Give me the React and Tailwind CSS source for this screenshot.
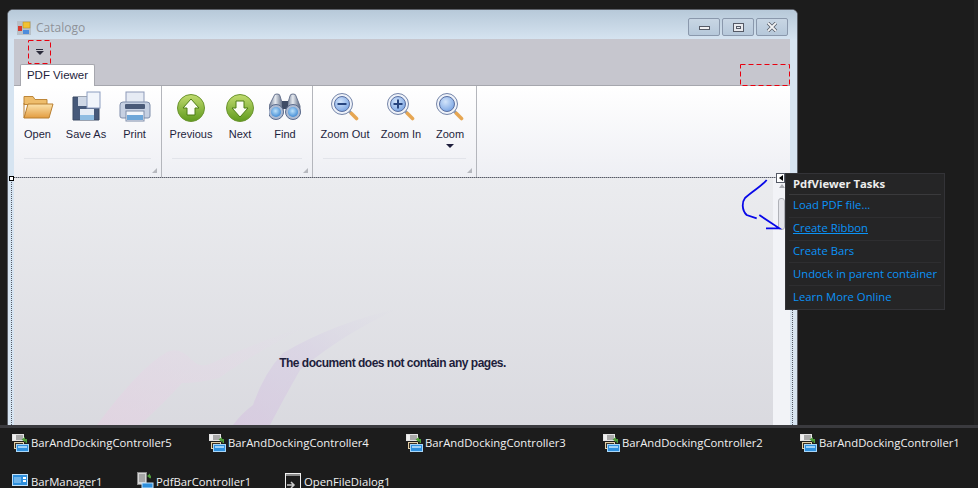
import React from 'react';

const FolderIcon = () => (
  <svg width="32" height="32" viewBox="0 0 32 32">
    <defs>
      <linearGradient id="fold" x1="0" y1="0" x2="0" y2="1">
        <stop offset="0" stopColor="#fde8b4" />
        <stop offset="1" stopColor="#e39c40" />
      </linearGradient>
    </defs>
    <path d="M2 5.500h9l2 3h12v5H2z" fill="#eebd6c" stroke="#bd8638" />
    <path d="M2 27V12M2 27l4-14h25l-4 14z" fill="url(#fold)" stroke="#b97f30" />
  </svg>
);

const SaveIcon = () => (
  <svg width="32" height="32" viewBox="0 0 32 32">
    <path d="M3 6h26v23H3z" fill="#46597a" stroke="#3a4a64" />
    <rect x="10" y="18" width="14" height="11" fill="#e6edf6" />
    <rect x="10" y="24" width="14" height="5" fill="#8fbde2" />
    <rect x="8" y="6" width="9" height="9" fill="#cfd8e6" />
    <rect x="17" y="1" width="13" height="16" fill="#f1f5fb" stroke="#8c9dc0" />
  </svg>
);

const PrintIcon = () => (
  <svg width="32" height="32" viewBox="0 0 32 32">
    <rect x="7" y="1" width="18" height="13" fill="#e6ebf4" stroke="#8d9ab8" />
    <path d="M1 14q0-3 3-3h24q3 0 3 3v11q0 2-2 2H3q-2 0-2-2z" fill="#c6d0e2" stroke="#7f8daa" />
    <rect x="6" y="13" width="20" height="5" rx="1" fill="#4a5a78" />
    <rect x="7" y="20" width="18" height="10" fill="#f3f6fb" stroke="#7f8daa" />
    <rect x="8" y="24" width="16" height="5" fill="#6ea6d8" />
  </svg>
);

const ArrowIcon = ({ up, id }) => (
  <svg width="30" height="30" viewBox="0 0 30 30" className="mt-[2px]">
    <defs>
      <linearGradient id={id} x1="0" y1="0" x2="0" y2="1">
        <stop offset="0" stopColor="#c2dc70" />
        <stop offset="1" stopColor="#5f9a1c" />
      </linearGradient>
    </defs>
    <circle cx="15" cy="15" r="13.500" fill={`url(#${id})`} stroke="#6b9430" />
    <path
      d={up ? 'M15 6l8 9h-4v7h-8v-7H7z' : 'M15 24l8-9h-4V8h-8v7H7z'}
      fill="#fbfdf5"
      stroke="#4d7d14"
    />
  </svg>
);

const BinocularsIcon = () => (
  <svg width="32" height="32" viewBox="0 0 32 32">
    <defs>
      <linearGradient id="barrel" x1="0" y1="0" x2="1" y2="0">
        <stop offset="0" stopColor="#6b7890" />
        <stop offset="0.45" stopColor="#e6eaf0" />
        <stop offset="1" stopColor="#56637c" />
      </linearGradient>
      <radialGradient id="lens" cx="0.45" cy="0.4" r="0.7">
        <stop offset="0" stopColor="#bfe2fa" />
        <stop offset="1" stopColor="#2f7fd0" />
      </radialGradient>
    </defs>
    <path d="M5 5q0-2 3-2t3 2l3 10v8H0V15z" fill="url(#barrel)" stroke="#6a7690" />
    <path d="M21 5q0-2 3-2t3 2l4 10v8H18V15z" fill="url(#barrel)" stroke="#6a7690" />
    <rect x="13" y="10" width="6" height="8" fill="#3f4c66" />
    <circle cx="7" cy="21" r="7.500" fill="#aebbd2" stroke="#5b6b8c" />
    <circle cx="24" cy="21" r="7.500" fill="#aebbd2" stroke="#5b6b8c" />
    <circle cx="7" cy="21" r="5" fill="url(#lens)" />
    <circle cx="24" cy="21" r="5" fill="url(#lens)" />
  </svg>
);

const MagnifierIcon = ({ kind, id }) => (
  <svg width="28" height="28" viewBox="0 0 28 28" className="mt-[2px]">
    <defs>
      <radialGradient id={id} cx="0.4" cy="0.35" r="0.8">
        <stop offset="0" stopColor="#d3e4fa" />
        <stop offset="1" stopColor="#6c9be0" />
      </radialGradient>
    </defs>
    <path d="M17 17l3 3" stroke="#8d97ab" strokeWidth="3" />
    <path d="M20.500 20.500l5 5" stroke="#e6a652" strokeWidth="3.600" strokeLinecap="round" />
    <circle cx="11" cy="11" r="10.500" fill="#eef2f9" stroke="#7484a8" />
    <circle cx="11" cy="11" r="7.500" fill={`url(#${id})`} stroke="#5a6fa0" />
    {kind !== 'zoom' && <rect x="6.500" y="10" width="9" height="2" fill="#27457f" />}
    {kind === 'in' && <rect x="10" y="6.500" width="2" height="9" fill="#27457f" />}
  </svg>
);

const RibbonButton = ({ label, width, icon, dropdown }) => (
  <div className="flex flex-col items-center" style={{ width }}>
    <div className="h-[36px] pt-[5px] flex items-start justify-center">{icon}</div>
    <span className="mt-[4px] text-[11px] leading-[16px] whitespace-nowrap text-[#1e1e3c] font-['Liberation_Sans',sans-serif]">{label}</span>
    {dropdown && <span className="mt-[2px] w-0 h-0 border-x-[4px] border-x-transparent border-t-[4px] border-t-[#1e1e3c]" />}
  </div>
);

const RibbonGroup = ({ width, children }) => (
  <div className="relative h-full border-r border-[#b4b6bc] px-[4px] shrink-0" style={{ width }}>
    <div className="flex">{children}</div>
    <div className="absolute left-[10px] right-[10px] top-[72px] h-px bg-[#e2e4ea]" />
    <div className="absolute right-[4px] bottom-[4px] w-0 h-0 border-l-[5px] border-l-transparent border-b-[5px] border-b-[#b6b8be]" />
  </div>
);

const DashedBox = ({ width, height, className }) => (
  <svg width={width} height={height} className={className}>
    <rect x="0.5" y="0.5" width={width - 1} height={height - 1} fill="none" stroke="#e8000f" strokeDasharray="5 3" />
  </svg>
);

const TrayIcon = () => (
  <svg width="17" height="18" viewBox="0 0 17 18" className="shrink-0">
    <rect x="0.500" y="0.500" width="11" height="6" fill="#a9a9a9" stroke="#e4e4e4" />
    <rect x="1" y="1" width="3" height="5" fill="#f0f0f0" />
    <path d="M15 9V5H13V3L9.500 5.500 13 8V7h.5v2z" fill="#4f9d3a" />
    <rect x="2.500" y="8.500" width="9" height="6" fill="#3a3024" stroke="#e2cfa6" />
    <rect x="4.500" y="10.500" width="12" height="7" fill="#2e8fdc" stroke="#a9d6f8" />
    <rect x="6" y="12" width="9" height="2" fill="#9fd2f8" />
  </svg>
);

const trayTop = ['BarAndDockingController5', 'BarAndDockingController4', 'BarAndDockingController3', 'BarAndDockingController2', 'BarAndDockingController1'];

const TaskLink = ({ children, underline }) => (
  <div className={`h-[22.75px] mx-[3px] px-[4px] flex items-center whitespace-nowrap border-b border-[#2e2e30] last:border-b-0 text-[11.3px] text-[#0b93f6] ${underline ? 'underline' : ''}`}>
    {children}
  </div>
);

export default function App() {
  return (
    <div className="relative w-[978px] h-[488px] bg-[#1c1c1c] overflow-hidden flex flex-col font-['Open_Sans',sans-serif]">
      {/* designer surface */}
      <div className="h-[425px] shrink-0 pt-[9px] pl-[7px] overflow-hidden">
        <div className="w-[791px] h-[440px] border border-[#5c6068] rounded-t-[6px] bg-[#d6e4f1] flex flex-col overflow-hidden">
          {/* title bar */}
          <div className="h-[29px] shrink-0 flex items-start pt-[11px] pl-[9px] pr-[9px] bg-gradient-to-b from-[#b7c9d9] to-[#d5e3f0]">
            <svg width="14" height="14" viewBox="0 0 14 14" className="shrink-0">
              <rect x="0" y="0" width="14" height="14" fill="#b8c0c8" />
              <rect x="6" y="1" width="7" height="6" fill="#f2c230" stroke="#b08a20" strokeWidth="0.5" />
              <rect x="1" y="5" width="4" height="5" fill="#d8382c" />
              <rect x="6" y="9" width="6" height="4" fill="#4d8cdc" />
            </svg>
            <span className="ml-[5px] text-[12px] leading-[14px] text-[#8f9298]">Catalogo</span>
            <div className="ml-auto flex gap-[2px] mt-[-3px]">
              <div className="w-[32px] h-[18px] border border-[#8a98ac] rounded-[2px] bg-gradient-to-b from-[#c8d6e4] to-[#b6c8da] flex items-center justify-center">
                <span className="w-[11px] h-[4px] mt-[2px] bg-[#f0f0f2] border border-[#555a66]" />
              </div>
              <div className="w-[32px] h-[18px] border border-[#8a98ac] rounded-[2px] bg-gradient-to-b from-[#c8d6e4] to-[#b6c8da] flex items-center justify-center">
                <span className="w-[11px] h-[9px] bg-[#e8eaee] border border-[#555a66] flex items-center justify-center">
                  <span className="w-[5px] h-[3px] border border-[#555a66]" />
                </span>
              </div>
              <div className="w-[32px] h-[18px] border border-[#8a98ac] rounded-[2px] bg-gradient-to-b from-[#c8d6e4] to-[#b6c8da] flex items-center justify-center">
                <svg width="12" height="10" viewBox="0 0 12 10">
                  <path d="M2 1l8 8M10 1L2 9" stroke="#555a66" strokeWidth="3.400" fill="none" />
                  <path d="M2 1l8 8M10 1L2 9" stroke="#f2f3f5" strokeWidth="1.800" fill="none" />
                </svg>
              </div>
            </div>
          </div>

          {/* client area */}
          <div className="flex-1 ml-[6px] mr-[7px] flex flex-col min-h-0">
            <div className="relative h-[47px] shrink-0 bg-[#c6c6ce] border-b border-[#a6a7ae]">
              <div className="absolute left-[14px] top-[1px] w-[23px] h-[24px] flex flex-col items-center justify-center gap-[1px]">
                <DashedBox width={23} height={24} className="absolute left-0 top-0" />
                <span className="w-[7px] h-px bg-[#2a2a3a]" />
                <span className="w-0 h-0 border-x-[4px] border-x-transparent border-t-[4px] border-t-[#2a2a3a]" />
              </div>
              <DashedBox width={50} height={22} className="absolute right-0 top-[25px]" />
              <div className="absolute left-[6px] bottom-[-1px] w-[75px] h-[22px] bg-white border border-b-0 border-[#a6a7ae] rounded-t-[2px] flex items-center justify-center text-[11.5px] text-[#1e1e3c] font-['Liberation_Sans',sans-serif]">
                PDF Viewer
              </div>
            </div>

            {/* ribbon */}
            <div className="h-[92px] shrink-0 flex bg-gradient-to-b from-white to-[#eeeff4] border-b border-[#a8a9b0]">
              <RibbonGroup width={148}>
                <RibbonButton label="Open" width={39} icon={<FolderIcon />} />
                <RibbonButton label="Save As" width={58} icon={<SaveIcon />} />
                <RibbonButton label="Print" width={39} icon={<PrintIcon />} />
              </RibbonGroup>
              <RibbonGroup width={151}>
                <RibbonButton label="Previous" width={50} icon={<ArrowIcon up id="upG" />} />
                <RibbonButton label="Next" width={48} icon={<ArrowIcon id="downG" />} />
                <RibbonButton label="Find" width={42} icon={<BinocularsIcon />} />
              </RibbonGroup>
              <RibbonGroup width={164}>
                <RibbonButton label="Zoom Out" width={56} icon={<MagnifierIcon kind="out" id="zOut" />} />
                <RibbonButton label="Zoom In" width={56} icon={<MagnifierIcon kind="in" id="zIn" />} />
                <RibbonButton label="Zoom" width={42} dropdown icon={<MagnifierIcon kind="zoom" id="zZoom" />} />
              </RibbonGroup>
            </div>

            {/* viewer */}
            <div className="relative flex-1 flex min-h-0 bg-gradient-to-b from-[#ebecef] to-[#d8d8de]">
              <div className="relative flex-1 h-[247px] overflow-hidden flex items-center justify-center">
                <svg width="759" height="247" viewBox="0 0 759 247" className="absolute left-0 top-0">
                  <defs>
                    <linearGradient id="wavePink" x1="0" y1="1" x2="1" y2="0">
                      <stop offset="0" stopColor="#e6cfe2" stopOpacity="0.55" />
                      <stop offset="0.7" stopColor="#e6d8e8" stopOpacity="0.3" />
                      <stop offset="1" stopColor="#e0dcea" stopOpacity="0" />
                    </linearGradient>
                    <linearGradient id="wavePurple" x1="0" y1="1" x2="1" y2="0">
                      <stop offset="0" stopColor="#d6c2e0" stopOpacity="0.6" />
                      <stop offset="0.55" stopColor="#d4c8e4" stopOpacity="0.4" />
                      <stop offset="1" stopColor="#d8d4e8" stopOpacity="0" />
                    </linearGradient>
                  </defs>
                  <path d="M83 247Q125 190 153 174Q165 168 178 182Q185 190 196 186Q240 165 300 145Q240 175 205 200Q185 205 168 205Q150 225 126 247Z" fill="url(#wavePink)" />
                  <path d="M239 227Q250 195 269 175Q320 145 386 130Q330 155 286 192Q270 220 256 247H219Q228 235 239 227Z" fill="url(#wavePurple)" />
                </svg>
                <span className="relative top-[61px] left-[-1px] font-['Liberation_Sans',sans-serif] text-[12px] font-bold tracking-[-0.5px] text-[#1e1e3c]">
                  The document does not contain any pages.
                </span>
              </div>
              {/* scrollbar */}
              <div className="w-[17px] h-full shrink-0 bg-[#f2f3f7] flex flex-col items-center pt-[6px]">
                <span className="w-0 h-0 border-x-[3px] border-x-transparent border-b-[4px] border-b-[#a9abb1]" />
                <span className="mt-[10px] w-[7px] h-[32px] rounded-[3px] border border-[#b0b2b8] bg-[#e4e5ea]" />
              </div>
            </div>
          </div>
        </div>
      </div>

      {/* tray */}
      <div className="h-[3px] shrink-0 bg-[#3a3a3e]" />
      <div className="flex-1 pl-[12px] bg-[#1c1c1c] text-[11.3px] text-[#f1f1f1]">
        <div className="grid grid-cols-[197px_197px_197px_197px_197px] pt-[5px]">
          {trayTop.map((name) => (
            <div key={name} className="flex items-center gap-[2px] h-[20px]">
              <TrayIcon />
              <span className="whitespace-nowrap">{name}</span>
            </div>
          ))}
        </div>
        <div className="flex mt-[19px] h-[20px]">
          <div className="w-[125px] flex items-center gap-[3px]">
            <svg width="16" height="14" viewBox="0 0 16 14" className="shrink-0 mt-[-3px]">
              <rect x="0.500" y="0.500" width="15" height="11" fill="#2e8fdc" stroke="#bfe0fa" />
              <rect x="2" y="3" width="7" height="6" fill="#6fb5ec" />
              <rect x="11" y="3" width="3" height="2" fill="#fff" />
              <rect x="11" y="6" width="3" height="2" fill="#fff" />
            </svg>
            <span className="whitespace-nowrap">BarManager1</span>
          </div>
          <div className="w-[148px] flex items-center gap-[2px]">
            <svg width="17" height="17" viewBox="0 0 17 17" className="shrink-0 mt-[-4px]">
              <rect x="0.500" y="0.500" width="9" height="12" fill="#d6d6d6" stroke="#8a8a8a" />
              <path d="M2 3h6M2 5h6M2 7h6M2 9h6" stroke="#777" />
              <path d="M14 6V3.500H13V1.500L10 4 13 6.500z" fill="#4f9d3a" />
              <rect x="5" y="11" width="11" height="5" fill="#2e8fdc" stroke="#bfe0fa" />
            </svg>
            <span className="whitespace-nowrap">PdfBarController1</span>
          </div>
          <div className="flex items-center gap-[3px]">
            <svg width="16" height="16" viewBox="0 0 16 16" className="shrink-0 mt-[-3px]">
              <rect x="0.500" y="0.500" width="15" height="15" fill="#1c1c1c" stroke="#f1f1f1" />
              <rect x="1" y="1" width="14" height="2" fill="#8a8a8a" />
              <path d="M2 12h6M6 9l3 3-3 3" stroke="#ccc" strokeWidth="1.500" fill="none" />
            </svg>
            <span className="whitespace-nowrap">OpenFileDialog1</span>
          </div>
        </div>
      </div>

      {/* designer adorners lying over the form */}
      <div className="absolute left-[11px] top-[177px] w-[782px] h-[248px] border-t border-l border-r border-dotted border-[#555a66]" />
      <div className="absolute left-[9px] top-[176px] w-[5px] h-[5px] bg-white border border-black" />
      <div className="absolute left-[776px] top-[173px] w-[9px] h-[10px] bg-white border border-[#555a66] flex items-center justify-center">
        <span className="w-0 h-0 border-y-[3px] border-y-transparent border-r-[4px] border-r-black" />
      </div>
      <svg width="46" height="55" viewBox="0 0 46 55" className="absolute left-[738px] top-[178px]">
        <path d="M28.700 2C24 8 16 12 7 20C4 24 3.500 32 8.700 37L18.700 40.300M21.300 37L41.300 50.300H28" stroke="#0808e8" strokeWidth="1.800" fill="none" />
      </svg>

      {/* smart tag panel */}
      <div className="absolute left-[785px] top-[173px] w-[160px] h-[137px] bg-[#252526] border border-[#333337]">
        <div className="h-[21px] mx-[3px] px-[4px] flex items-center border-b border-[#3a3a3c] text-[11.3px] font-bold text-[#ededed]">
          PdfViewer Tasks
        </div>
        <TaskLink>Load PDF file...</TaskLink>
        <TaskLink underline>Create Ribbon</TaskLink>
        <TaskLink>Create Bars</TaskLink>
        <TaskLink>Undock in parent container</TaskLink>
        <TaskLink>Learn More Online</TaskLink>
      </div>

      <div className="absolute right-0 top-0 w-[4px] h-[425px] bg-[#212121]" />
    </div>
  );
}
